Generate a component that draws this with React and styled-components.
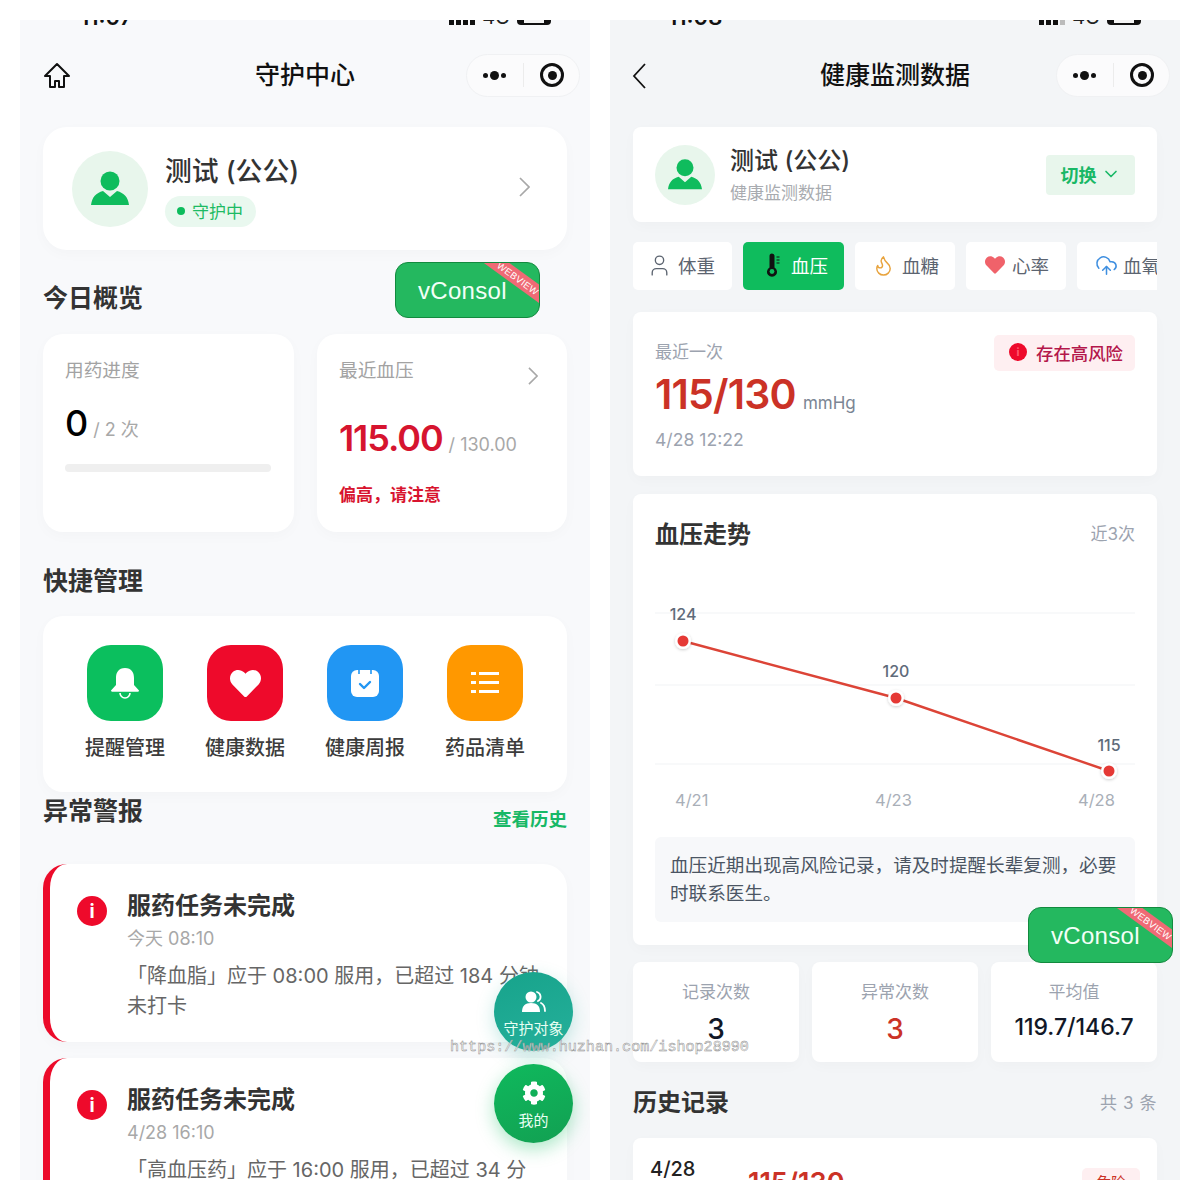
import React from 'react';
import styled, { createGlobalStyle } from 'styled-components';
import { ChevronDown, User, Flame, CloudUpload } from 'lucide-react';
import { FaCog, FaHeart } from 'react-icons/fa';

const GlobalStyle = createGlobalStyle`
  html, body {
    margin: 0;
    padding: 0;
    background: #fff;
    font-family: Inter, "Noto Sans CJK SC", sans-serif;
  }
  * { box-sizing: border-box; }
`;

const Page = styled.div`
  position: relative;
  width: 1200px;
  height: 1200px;
  padding: 20px;
  display: flex;
  gap: 20px;
  background: #fff;
  overflow: hidden;
`;

const Phone = styled.div`
  position: relative;
  width: 570px;
  height: 1160px;
  overflow: hidden;
  background: ${({ $bg }) => $bg};
`;

const StatusBar = styled.div`
  height: 5px;
  overflow: hidden;
  display: flex;
  align-items: flex-end;
  justify-content: space-between;
  padding: 0 39px 0 ${({ $pl }) => $pl}px;
`;

const StatusTime = styled.span`
  font-size: 22px;
  font-weight: 600;
  line-height: 16px;
  color: #111;
`;

const StatusNet = styled.span`
  font-size: 20px;
  font-weight: 400;
  line-height: 15px;
  color: #222;
`;

const StatusRight = styled.div`
  display: flex;
  align-items: flex-end;
  gap: 7px;
`;

const SignalBars = styled.div`
  display: flex;
  gap: 2px;
  span {
    width: 5px;
    height: 10px;
    background: #111;
  }
  span:last-child {
    background: ${({ $weak }) => ($weak ? '#bbb' : '#111')};
  }
`;

const Battery = styled.div`
  position: relative;
  width: 34px;
  height: 14px;
  background: #111;
  border-radius: 4px;
  &::after {
    content: '';
    position: absolute;
    left: 7px;
    right: 7px;
    bottom: 2px;
    height: 3px;
    background: #f4f4f4;
  }
`;

const Nav = styled.div`
  height: 43px;
  margin-top: 29px;
  padding: 0 10px;
  display: grid;
  grid-template-columns: 1fr auto 1fr;
  align-items: center;
`;

const NavLead = styled.div`
  padding-left: ${({ $pl }) => $pl}px;
  line-height: 0;
`;

const NavTitle = styled.div`
  padding-bottom: 2px;
  font-size: 25px;
  font-weight: 500;
  color: #111;
  line-height: 34px;
`;

const Capsule = styled.div`
  justify-self: end;
  width: 114px;
  height: 43px;
  padding-bottom: 1px;
  border-radius: 22px;
  background: #fbfbfc;
  border: 1px solid #f0f1f3;
  display: grid;
  grid-template-columns: 1fr 1px 1fr;
  align-items: center;
  justify-items: center;
`;

const CapsuleLine = styled.div`
  width: 1px;
  height: 24px;
  background: #ececec;
`;

const Dots = styled.div`
  display: flex;
  align-items: center;
  gap: 2px;
  span { width: 5px; height: 5px; border-radius: 50%; background: #111; }
  span:nth-child(2) { width: 9px; height: 9px; }
`;

const RecordDot = styled.div`
  width: 24px;
  height: 24px;
  margin-left: 2px;
  border-radius: 50%;
  border: 3px solid #111;
  display: flex;
  align-items: center;
  justify-content: center;
  &::after {
    content: '';
    width: 9px;
    height: 9px;
    border-radius: 50%;
    background: #111;
  }
`;

const Content = styled.div`
  padding: 30px 23px 0;
`;

const Card = styled.div`
  background: #fff;
  border-radius: ${({ $r }) => $r || 8}px;
  box-shadow: 0 4px 14px rgba(30, 40, 60, 0.025);
`;

const ProfileCard = styled(Card)`
  height: 123px;
  padding: 0 37px 0 29px;
  display: flex;
  align-items: center;
  gap: 17px;
  > svg {
    margin-bottom: 3px;
  }
`;

const Avatar = styled.div`
  width: ${({ $size }) => $size}px;
  height: ${({ $size }) => $size}px;
  border-radius: 50%;
  background: #e8f6ec;
  display: flex;
  align-items: center;
  justify-content: center;
  flex-shrink: 0;
`;

const ProfileText = styled.div`
  flex: 1;
  padding-top: ${({ $pt }) => $pt || 0}px;
  display: flex;
  flex-direction: column;
  align-items: flex-start;
`;

const Name = styled.div`
  font-size: ${({ $size }) => $size}px;
  font-weight: 500;
  color: #333;
  line-height: 34px;
`;

const GuardTag = styled.div`
  margin-top: 8px;
  height: 31px;
  padding: 0 13px 1px 12px;
  border-radius: 16px;
  background: #e9f8ef;
  color: #1dbb64;
  font-size: 17px;
  display: flex;
  align-items: center;
  gap: 7px;
  &::before {
    content: '';
    width: 8px;
    height: 8px;
    border-radius: 50%;
    background: #0cbc5c;
  }
`;

const SectionTitle = styled.div`
  margin-top: ${({ $mt }) => $mt}px;
  font-size: ${({ $size }) => $size || 25}px;
  font-weight: 600;
  line-height: 34px;
  color: #333;
`;

const OverviewGrid = styled.div`
  margin-top: 19px;
  display: grid;
  grid-template-columns: 251px 250px;
  gap: 23px;
`;

const OverviewCard = styled(Card)`
  position: relative;
  height: 198px;
  padding: 23px 22px 0;
`;

const OverviewLabel = styled.div`
  font-size: 18.7px;
  line-height: 28px;
  color: #a3a3a3;
`;

const OverviewChevron = styled.div`
  position: absolute;
  top: 33px;
  right: 29px;
  line-height: 0;
`;

const ValueRow = styled.div`
  margin-top: ${({ $mt }) => $mt}px;
  display: flex;
  align-items: baseline;
  gap: ${({ $gap }) => $gap}px;
  white-space: nowrap;
`;

const BigValue = styled.span`
  font-size: ${({ $size }) => $size}px;
  font-weight: ${({ $w }) => $w};
  line-height: 48px;
  letter-spacing: ${({ $ls }) => $ls || 0}px;
  color: ${({ $color }) => $color};
`;

const SubValue = styled.span`
  font-size: 18px;
  color: #a8a8a8;
`;

const ProgressTrack = styled.div`
  margin-top: 17px;
  width: 206px;
  height: 8px;
  border-radius: 4px;
  background: #efefef;
`;

const WarnText = styled.div`
  margin-top: 20px;
  font-size: 17px;
  font-weight: 700;
  line-height: 26px;
  color: #d8142f;
`;

const QuickCard = styled(Card)`
  margin-top: 18px;
  height: 176px;
  padding: 29px 44px 0;
  display: grid;
  grid-template-columns: repeat(4, 76px);
  justify-content: space-between;
`;

const QuickItem = styled.div`
  display: flex;
  flex-direction: column;
  align-items: center;
`;

const QuickIcon = styled.div`
  width: 76px;
  height: 76px;
  border-radius: 24px;
  background: ${({ $bg }) => $bg};
  display: flex;
  align-items: center;
  justify-content: center;
`;

const QuickLabel = styled.div`
  margin-top: 13px;
  font-size: 20px;
  font-weight: 500;
  line-height: 28px;
  color: #3c3c3c;
  white-space: nowrap;
`;

const AlertHeader = styled.div`
  margin-top: 2px;
  display: flex;
  justify-content: space-between;
`;

const HistoryLink = styled.div`
  margin-top: 12px;
  font-size: 18.5px;
  font-weight: 600;
  line-height: 26px;
  color: #18b866;
`;

const AlertList = styled.div`
  margin-top: 32px;
  display: flex;
  flex-direction: column;
  gap: 16px;
`;

const AlertCard = styled(Card)`
  min-height: 178px;
  border-left: 7px solid #ec0b2a;
  border-radius: 24px;
  padding: 25px 22px 0 27px;
  display: flex;
  gap: 20px;
`;

const AlertDot = styled.div`
  margin-top: 7px;
  width: 30px;
  height: 30px;
  border-radius: 50%;
  background: #ee0a2b;
  color: #fff;
  font-size: 19px;
  font-weight: 700;
  display: flex;
  align-items: center;
  justify-content: center;
  flex-shrink: 0;
`;

const AlertBody = styled.div`
  flex: 1;
`;

const AlertTitle = styled.div`
  font-size: 24px;
  font-weight: 600;
  line-height: 34px;
  color: #333;
`;

const AlertTime = styled.div`
  margin-top: 3px;
  font-size: 18px;
  line-height: 26px;
  color: #a8a8a8;
`;

const AlertText = styled.div`
  margin-top: 9px;
  font-size: 20px;
  line-height: 30px;
  color: #666;
`;

const Fab = styled.div`
  position: absolute;
  left: 474px;
  top: ${({ $top }) => $top}px;
  width: 79px;
  height: 79px;
  border-radius: 50%;
  background: ${({ $bg }) => $bg};
  box-shadow: 0 6px 18px ${({ $glow }) => $glow};
  color: #e8fff3;
  font-size: 15px;
  display: flex;
  flex-direction: column;
  align-items: center;
  justify-content: flex-end;
  padding-bottom: 13px;
  gap: 4px;
`;

const VConsole = styled.div`
  position: absolute;
  left: ${({ $x }) => $x}px;
  top: ${({ $y }) => $y}px;
  width: 145px;
  height: 56px;
  border-radius: 13px;
  border: 1.5px solid #128a3e;
  background: #24b85f;
  color: #f2fff7;
  font-family: "Liberation Sans", Inter, sans-serif;
  font-size: 24px;
  display: flex;
  align-items: center;
  padding-left: 22px;
  padding-top: 2px;
  overflow: hidden;
  letter-spacing: 0.3px;
`;

const Ribbon = styled.div`
  position: absolute;
  top: 8px;
  right: -21px;
  width: 84px;
  height: 15px;
  line-height: 15px;
  background: #ef6a75;
  color: #fff;
  font-size: 9.5px;
  letter-spacing: 0.4px;
  text-align: center;
  transform: rotate(36deg);
`;

const Watermark = styled.div`
  position: absolute;
  left: 450px;
  top: 1038px;
  font-family: "Liberation Mono", monospace;
  font-size: 15.1px;
  line-height: 18px;
  white-space: nowrap;
  color: rgba(255, 255, 255, 0.7);
  -webkit-text-stroke: 0.5px #8e8e8e;
  pointer-events: none;
`;

const HealthProfile = styled(Card)`
  height: 95px;
  padding: 0 22px;
  display: flex;
  align-items: center;
  gap: 15px;
`;

const SubName = styled.div`
  margin-top: 2px;
  font-size: 17px;
  line-height: 26px;
  color: #a8abb0;
`;

const SwitchButton = styled.div`
  width: 89px;
  height: 40px;
  padding-bottom: 1px;
  border-radius: 4px;
  background: #e8f6ec;
  color: #19b866;
  font-size: 18px;
  font-weight: 600;
  display: flex;
  align-items: center;
  justify-content: center;
  gap: 4px;
`;

const TabsRow = styled.div`
  margin-top: 20px;
  display: flex;
  gap: 11px;
  overflow: hidden;
`;

const Tab = styled.div`
  width: ${({ $w }) => $w}px;
  height: 48px;
  flex-shrink: 0;
  border-radius: 5px;
  background: ${({ $active }) => ($active ? '#0fbc5d' : '#fff')};
  color: ${({ $active }) => ($active ? '#fff' : '#5c6470')};
  font-size: 18.5px;
  display: flex;
  align-items: center;
  padding: 0 0 2px ${({ $pl }) => $pl}px;
  gap: ${({ $gap }) => $gap || 8}px;
  white-space: nowrap;
`;

const LatestCard = styled(Card)`
  margin-top: 22px;
  height: 164px;
  padding: 28px 22px 0;
  display: flex;
  justify-content: space-between;
  align-items: flex-start;
`;

const MutedLine = styled.div`
  font-size: 17px;
  line-height: 24px;
  color: #9ca3af;
`;

const LatestValue = styled.div`
  margin-top: 5px;
  display: flex;
  align-items: baseline;
  gap: 7px;
  line-height: 50px;
`;

const PressureText = styled.span`
  font-size: 41px;
  font-weight: 600;
  letter-spacing: -0.8px;
  color: #cb3226;
`;

const UnitText = styled.span`
  font-size: 17px;
  color: #7b8594;
`;

const DateLine = styled(MutedLine)`
  margin-top: 0;
  font-size: 17.6px;
`;

const RiskBadge = styled.div`
  margin-top: -5px;
  width: 141px;
  height: 36px;
  padding: 0 0 2px 15px;
  border-radius: 5px;
  background: #feeff1;
  color: #b4174b;
  font-size: 17.4px;
  font-weight: 500;
  display: flex;
  align-items: center;
  gap: 9px;
`;

const RiskDot = styled.div`
  width: 18px;
  height: 18px;
  border-radius: 50%;
  background: #ee0a2b;
  color: #ff5a6c;
  font-size: 11px;
  font-weight: 700;
  display: flex;
  align-items: center;
  justify-content: center;
`;

const TrendCard = styled(Card)`
  margin-top: 18px;
  padding: 23px 22px 23px;
`;

const TrendHeader = styled.div`
  display: flex;
  align-items: center;
  justify-content: space-between;
  height: 35px;
`;

const RangeLabel = styled(MutedLine)`
  margin-bottom: 2px;
`;

const ChartSvg = styled.svg`
  display: block;
  margin-top: 28px;
  overflow: visible;
  text {
    font-family: Inter, sans-serif;
  }
`;

const Note = styled.div`
  margin-top: 17px;
  height: 85px;
  padding: 14px 15px 0;
  border-radius: 6px;
  background: #f7f8fa;
  font-size: 18.6px;
  line-height: 28px;
  color: #4b5563;
`;

const StatsGrid = styled.div`
  margin-top: 17px;
  display: grid;
  grid-template-columns: repeat(3, 166px);
  justify-content: space-between;
`;

const StatCard = styled(Card)`
  height: 100px;
  padding-top: 17px;
  display: flex;
  flex-direction: column;
  align-items: center;
`;

const StatLabel = styled.div`
  font-size: 17px;
  line-height: 26px;
  color: #9ca3af;
`;

const StatValue = styled.div`
  margin-top: ${({ $mt }) => $mt}px;
  font-size: ${({ $size }) => $size}px;
  font-weight: 500;
  line-height: 34px;
  color: ${({ $color }) => $color || '#111827'};
`;

const HistoryHeader = styled.div`
  margin-top: 24px;
  display: flex;
  align-items: center;
  justify-content: space-between;
`;

const HistoryCount = styled.div`
  padding-bottom: 3px;
  font-size: 17px;
  letter-spacing: 0.6px;
  color: #9ca3af;
`;

const HistoryCard = styled(Card)`
  margin-top: 18px;
  height: 120px;
  padding: 18px 17px 0;
  display: flex;
  align-items: flex-start;
`;

const HistoryDate = styled.div`
  width: 98px;
  font-size: 20px;
  font-weight: 500;
  line-height: 26px;
  color: #222;
`;

const HistoryValue = styled.div`
  flex: 1;
  margin-top: 12px;
  font-size: 27px;
  font-weight: 600;
  line-height: 30px;
  color: #cb3226;
`;

const HistoryBadge = styled.div`
  margin-top: 12px;
  width: 58px;
  height: 30px;
  border-radius: 5px;
  background: #feeff1;
  color: #cb3226;
  font-size: 15px;
  line-height: 30px;
  text-align: center;
`;

const HomeIcon = () => (
  <svg width="28" height="27" viewBox="0 0 28 27" fill="none" stroke="#111" strokeWidth="2" strokeLinejoin="round">
    <path d="M14 2 2 14h5v11h5v-6h4v6h5V14h5z" />
  </svg>
);

const BackIcon = () => (
  <svg width="14" height="26" viewBox="0 0 14 26" fill="none" stroke="#111" strokeWidth="1.8">
    <path d="M13 1 2 13l11 12" />
  </svg>
);

const ForwardIcon = ({ w, h }) => (
  <svg width={w} height={h} viewBox="0 0 11 20" fill="none" stroke="#a8a8a8" strokeWidth="1.7">
    <path d="M1 1l9 9-9 9" />
  </svg>
);

const PersonIcon = ({ size }) => (
  <svg width={size} height={size} viewBox="0 0 38 36">
    <circle cx="19" cy="10" r="9.5" fill="#0fbc5d" />
    <path d="M0 34c1-8 5-12 12-14l7 6 7-6c7 2 11 6 12 14z" fill="#0fbc5d" />
  </svg>
);

const BellIcon = () => (
  <svg width="30" height="32" viewBox="0 0 30 32" fill="#fff">
    <path d="M15 1C8.500 1 6 5.500 6 11v7l-5 5.500c0 .8.5 1.200 1 1.200h26c.5 0 1-.4 1-1.200L24 18v-7c0-5.500-2.500-10-9-10z" />
    <path d="M10 26a5 5 0 0 0 10 0" fill="none" stroke="#fff" strokeWidth="1.6" />
  </svg>
);

const CalendarIcon = () => (
  <svg width="30" height="30" viewBox="0 0 30 30">
    <rect x="1" y="2" width="28" height="27" rx="6" fill="#fff" />
    <path d="M9 0v6M21 0v6" stroke="#2196f3" strokeWidth="1.6" />
    <path d="M10 16l4 4 6-6" fill="none" stroke="#2196f3" strokeWidth="2.4" strokeLinecap="round" strokeLinejoin="round" />
  </svg>
);

const ListIcon = () => (
  <svg width="30" height="26" viewBox="0 0 30 26" fill="#fff">
    <rect x="1" y="2" width="5" height="3" />
    <rect x="9" y="2" width="20" height="3" />
    <rect x="1" y="11" width="5" height="3" />
    <rect x="9" y="11" width="20" height="3" />
    <rect x="1" y="20" width="5" height="3" />
    <rect x="9" y="20" width="20" height="3" />
  </svg>
);

const ThermometerIcon = () => (
  <svg width="16" height="24" viewBox="0 0 16 24">
    <path d="M4.500 3a2.500 2.500 0 0 1 5 0v11.500a5 5 0 1 1-5 0z" fill="#111" />
    <circle cx="7" cy="18.500" r="2.400" fill="#0fbc5d" />
    <path d="M11.500 4h3M11.500 7h3M11.500 10h3" stroke="#111" strokeWidth="1.1" />
  </svg>
);

const GuardIcon = () => (
  <svg width="24" height="22" viewBox="0 0 24 22">
    <circle cx="9" cy="6" r="5.500" fill="#fff" />
    <path d="M0 21c0-6 3-9 9-9s9 3 9 9z" fill="#fff" />
    <path d="M15 1c4 1 5 7 1 9M19 12c2 1 4 4 4 8" fill="none" stroke="#fff" strokeWidth="1.8" strokeLinecap="round" />
  </svg>
);

const NavRight = () => (
  <Capsule>
    <Dots>
      <span />
      <span />
      <span />
    </Dots>
    <CapsuleLine />
    <RecordDot />
  </Capsule>
);

const Status = ({ time, pl, weak }) => (
  <StatusBar $pl={pl}>
    <StatusTime>{time}</StatusTime>
    <StatusRight>
      <SignalBars $weak={weak}>
        <span />
        <span />
        <span />
        <span />
      </SignalBars>
      <StatusNet>4G</StatusNet>
      <Battery />
    </StatusRight>
  </StatusBar>
);

const WebviewBadge = ({ x, y }) => (
  <VConsole $x={x} $y={y}>
    vConsol
    <Ribbon>WEBVIEW</Ribbon>
  </VConsole>
);

const quickItems = [
  { label: '提醒管理', bg: '#0bbf5e', icon: <BellIcon /> },
  { label: '健康数据', bg: '#ee0a2b', icon: <FaHeart size={31} color="#fff" /> },
  { label: '健康周报', bg: '#2196f3', icon: <CalendarIcon /> },
  { label: '药品清单', bg: '#ff9800', icon: <ListIcon /> },
];

const alerts = [
  { time: '今天 08:10', text: '「降血脂」应于 08:00 服用，已超过 184 分钟未打卡' },
  { time: '4/28 16:10', text: '「高血压药」应于 16:00 服用，已超过 34 分钟未打卡' },
];

const points = [
  { x: 28, y: 61, label: '124', ly: 40 },
  { x: 241, y: 118, label: '120', ly: 97 },
  { x: 454, y: 191, label: '115', ly: 171 },
];

const Chart = () => (
  <ChartSvg width="480" height="240" viewBox="0 0 480 240">
    <defs>
      <filter id="dotShadow" x="-50%" y="-50%" width="200%" height="200%">
        <feDropShadow dx="0" dy="1" stdDeviation="1.5" floodColor="#000" floodOpacity="0.2" />
      </filter>
    </defs>
    {[33, 105, 184].map((y) => (
      <line key={y} x1="0" x2="480" y1={y} y2={y} stroke="#f1f3f5" />
    ))}
    <polyline points={points.map((p) => `${p.x},${p.y}`).join(' ')} fill="none" stroke="#dc4437" strokeWidth="2.4" />
    {points.map((p) => (
      <g key={p.label}>
        <circle cx={p.x} cy={p.y} r="8" fill="#fff" filter="url(#dotShadow)" />
        <circle cx={p.x} cy={p.y} r="5.500" fill="#e53935" />
        <text x={p.x} y={p.ly} textAnchor="middle" fontSize="16" fontWeight="500" fill="#5f6b7a">
          {p.label}
        </text>
      </g>
    ))}
    <text x="20" y="226" fontSize="16.500" fill="#a9afb8">4/21</text>
    <text x="220" y="226" fontSize="16.500" fill="#a9afb8">4/23</text>
    <text x="423" y="226" fontSize="16.500" fill="#a9afb8">4/28</text>
  </ChartSvg>
);

const GuardPhone = () => (
  <Phone $bg="#f8f9fb">
    <Status time="11:07" pl={60} />
    <Nav>
      <NavLead $pl={13}>
        <HomeIcon />
      </NavLead>
      <NavTitle>守护中心</NavTitle>
      <NavRight />
    </Nav>
    <Content>
      <ProfileCard $r={24}>
        <Avatar $size={76}>
          <PersonIcon size={38} />
        </Avatar>
        <ProfileText $pt={3}>
          <Name $size={26.800}>测试 (公公)</Name>
          <GuardTag>守护中</GuardTag>
        </ProfileText>
        <ForwardIcon w={11} h={20} />
      </ProfileCard>

      <SectionTitle $mt={31}>今日概览</SectionTitle>
      <OverviewGrid>
        <OverviewCard $r={20}>
          <OverviewLabel>用药进度</OverviewLabel>
          <ValueRow $mt={14} $gap={5}>
            <BigValue $size={36} $w={500} $color="#000">0</BigValue>
            <SubValue>/ 2 次</SubValue>
          </ValueRow>
          <ProgressTrack />
        </OverviewCard>
        <OverviewCard $r={20}>
          <OverviewLabel>最近血压</OverviewLabel>
          <OverviewChevron>
            <ForwardIcon w={10} h={18} />
          </OverviewChevron>
          <ValueRow $mt={29} $gap={6}>
            <BigValue $size={36} $w={600} $ls={-1.1} $color="#d6142f">115.00</BigValue>
            <SubValue>/ 130.00</SubValue>
          </ValueRow>
          <WarnText>偏高，请注意</WarnText>
        </OverviewCard>
      </OverviewGrid>

      <SectionTitle $mt={32}>快捷管理</SectionTitle>
      <QuickCard $r={20}>
        {quickItems.map((item) => (
          <QuickItem key={item.label}>
            <QuickIcon $bg={item.bg}>{item.icon}</QuickIcon>
            <QuickLabel>{item.label}</QuickLabel>
          </QuickItem>
        ))}
      </QuickCard>

      <AlertHeader>
        <SectionTitle $mt={0}>异常警报</SectionTitle>
        <HistoryLink>查看历史</HistoryLink>
      </AlertHeader>
      <AlertList>
        {alerts.map((alert) => (
          <AlertCard key={alert.time}>
            <AlertDot>i</AlertDot>
            <AlertBody>
              <AlertTitle>服药任务未完成</AlertTitle>
              <AlertTime>{alert.time}</AlertTime>
              <AlertText>{alert.text}</AlertText>
            </AlertBody>
          </AlertCard>
        ))}
      </AlertList>
    </Content>

    <WebviewBadge x={375} y={242} />
    <Fab $top={952} $bg="linear-gradient(160deg, #17a38b, #25b09b)" $glow="rgba(30, 170, 150, 0.25)">
      <GuardIcon />
      守护对象
    </Fab>
    <Fab $top={1044} $bg="linear-gradient(160deg, #0fb95d, #12a052)" $glow="rgba(15, 185, 93, 0.35)">
      <FaCog size={24} color="#fff" />
      我的
    </Fab>
  </Phone>
);

const HealthPhone = () => (
  <Phone $bg="#f3f5f7">
    <Status time="11:08" pl={58} weak />
    <Nav>
      <NavLead $pl={12}>
        <BackIcon />
      </NavLead>
      <NavTitle>健康监测数据</NavTitle>
      <NavRight />
    </Nav>
    <Content>
      <HealthProfile>
        <Avatar $size={60}>
          <PersonIcon size={34} />
        </Avatar>
        <ProfileText $pt={1}>
          <Name $size={24}>测试 (公公)</Name>
          <SubName>健康监测数据</SubName>
        </ProfileText>
        <SwitchButton>
          切换
          <ChevronDown size={20} strokeWidth={2} />
        </SwitchButton>
      </HealthProfile>

      <TabsRow>
        <Tab $w={99} $pl={14} $gap={6}>
          <User size={25} strokeWidth={1.3} />
          体重
        </Tab>
        <Tab $w={101} $pl={22} $gap={10} $active>
          <ThermometerIcon />
          血压
        </Tab>
        <Tab $w={100} $pl={17} $gap={7}>
          <Flame size={23} strokeWidth={1.5} color="#e8a33d" />
          血糖
        </Tab>
        <Tab $w={100} $pl={19} $gap={7}>
          <FaHeart size={20} color="#f0626a" />
          心率
        </Tab>
        <Tab $w={99} $pl={18} $gap={5}>
          <CloudUpload size={23} strokeWidth={1.6} color="#3f8fe0" />
          血氧
        </Tab>
      </TabsRow>

      <LatestCard>
        <div>
          <MutedLine>最近一次</MutedLine>
          <LatestValue>
            <PressureText>115/130</PressureText>
            <UnitText>mmHg</UnitText>
          </LatestValue>
          <DateLine>4/28 12:22</DateLine>
        </div>
        <RiskBadge>
          <RiskDot>i</RiskDot>
          存在高风险
        </RiskBadge>
      </LatestCard>

      <TrendCard>
        <TrendHeader>
          <SectionTitle $mt={0} $size={24}>血压走势</SectionTitle>
          <RangeLabel>近3次</RangeLabel>
        </TrendHeader>
        <Chart />
        <Note>血压近期出现高风险记录，请及时提醒长辈复测，必要时联系医生。</Note>
      </TrendCard>

      <StatsGrid>
        <StatCard>
          <StatLabel>记录次数</StatLabel>
          <StatValue $mt={7} $size={28}>3</StatValue>
        </StatCard>
        <StatCard>
          <StatLabel>异常次数</StatLabel>
          <StatValue $mt={7} $size={28} $color="#cb3226">3</StatValue>
        </StatCard>
        <StatCard>
          <StatLabel>平均值</StatLabel>
          <StatValue $mt={5} $size={23}>119.7/146.7</StatValue>
        </StatCard>
      </StatsGrid>

      <HistoryHeader>
        <SectionTitle $mt={0} $size={24}>历史记录</SectionTitle>
        <HistoryCount>共 3 条</HistoryCount>
      </HistoryHeader>
      <HistoryCard>
        <HistoryDate>4/28</HistoryDate>
        <HistoryValue>115/130</HistoryValue>
        <HistoryBadge>危险</HistoryBadge>
      </HistoryCard>
    </Content>

    <WebviewBadge x={418} y={887} />
  </Phone>
);

export default function App() {
  return (
    <Page>
      <GlobalStyle />
      <GuardPhone />
      <HealthPhone />
      <Watermark>https://www.huzhan.com/ishop28990</Watermark>
    </Page>
  );
}
